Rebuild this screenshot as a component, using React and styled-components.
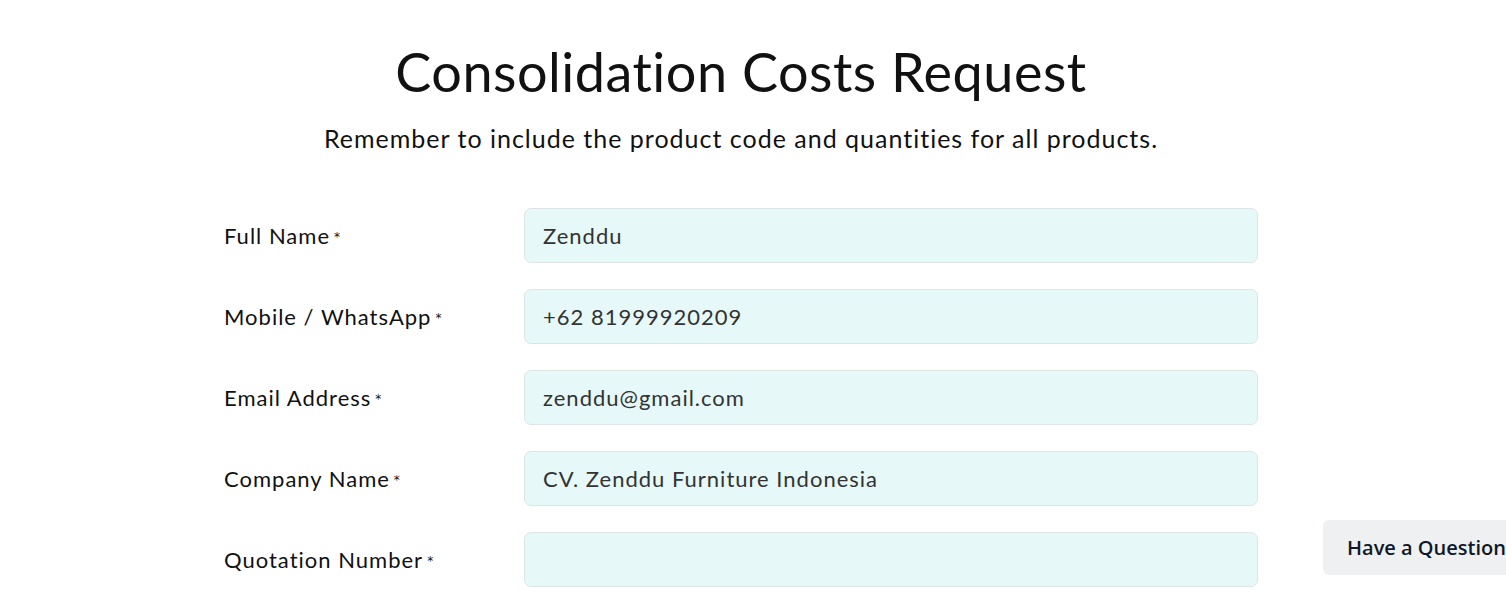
import styled, { createGlobalStyle } from 'styled-components';

const GlobalStyle = createGlobalStyle`
  body {
    margin: 0;
    background: #fff;
    font-family: 'Lato', 'Noto Sans', sans-serif;
    color: #111;
  }
`;

const fields = [
  { label: 'Full Name', value: 'Zenddu' },
  { label: 'Mobile / WhatsApp', value: '+62 81999920209' },
  { label: 'Email Address', value: 'zenddu@gmail.com' },
  { label: 'Company Name', value: 'CV. Zenddu Furniture Indonesia' },
  { label: 'Quotation Number', value: '' },
];

function App() {
  return (
    <>
      <GlobalStyle />
      <Page>
        <Header>
          <Title>Consolidation Costs Request</Title>
          <Subtitle>Remember to include the product code and quantities for all products.</Subtitle>
        </Header>
        <Form>
          {fields.map((f) => (
            <Row key={f.label}>
              <Label>
                {f.label}
                <Star>*</Star>
              </Label>
              <Input defaultValue={f.value} />
            </Row>
          ))}
        </Form>
      </Page>
      <QuestionBtn>Have a Question?</QuestionBtn>
    </>
  );
}

const Page = styled.main`
  padding: 40px 24px 0 0;
  display: flex;
  flex-direction: column;
  align-items: center;
`;

const Header = styled.header`
  display: flex;
  flex-direction: column;
  align-items: center;
  gap: 17px;
`;

const Title = styled.h1`
  margin: 0;
  font-size: 54px;
  font-weight: 400;
  line-height: 1.2;
  letter-spacing: 0.5px;
`;

const Subtitle = styled.p`
  margin: 0;
  font-size: 25px;
  line-height: 1.3;
  letter-spacing: 1px;
`;

const Form = styled.form`
  width: 1034px;
  margin-top: 54px;
  display: flex;
  flex-direction: column;
  gap: 26px;
`;

const Row = styled.div`
  display: grid;
  grid-template-columns: 300px 1fr;
  align-items: center;
`;

const Label = styled.label`
  font-size: 22px;
  letter-spacing: 1px;
  color: #111;
`;

const Star = styled.span`
  font-family: 'DejaVu Sans', sans-serif;
  font-size: 12px;
  margin-left: 4px;
  letter-spacing: 0;
  vertical-align: 3px;
`;

const Input = styled.input`
  height: 55px;
  box-sizing: border-box;
  padding: 0 18px;
  border: 1px solid #dde5e5;
  border-radius: 7px;
  background: #e6f8f8;
  font-family: inherit;
  font-size: 22px;
  letter-spacing: 1px;
  color: #333;
  outline: none;
`;

const QuestionBtn = styled.button`
  position: fixed;
  left: 1323px;
  top: 520px;
  height: 55px;
  padding: 0 24px;
  border: none;
  border-radius: 6px;
  background: #eff0f2;
  font-family: 'Open Sans', sans-serif;
  font-weight: 600;
  font-size: 20px;
  color: #111827;
  white-space: nowrap;
`;

export default App;
